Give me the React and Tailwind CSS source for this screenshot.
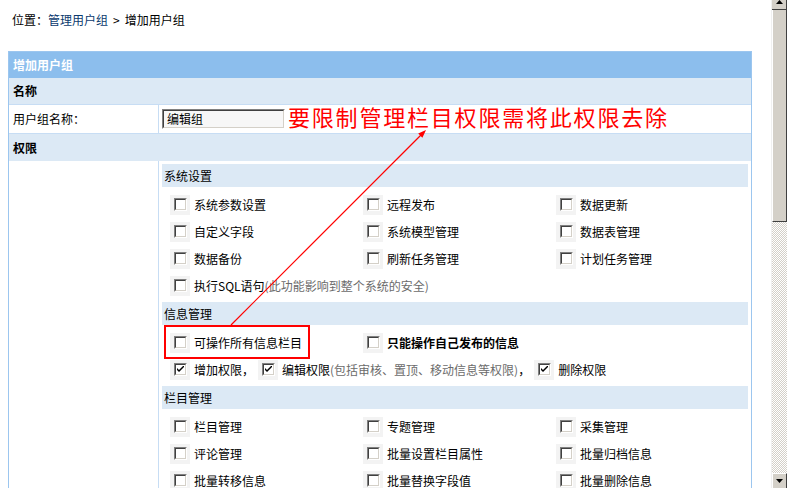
import React from "react";

function Cb({ checked }) {
  return (
    <span className="inline-flex w-[20px] h-[20px] bg-[#f3f3f3] items-center justify-center shrink-0">
      <span className="w-[13px] h-[13px] border border-t-[#808080] border-l-[#808080] border-b-[#ffffff] border-r-[#ffffff] flex">
        <span className="flex-1 border border-t-[#404040] border-l-[#404040] border-b-[#d4d0c8] border-r-[#d4d0c8] bg-white flex items-center justify-center">
          {checked && (
            <svg width="7" height="7" viewBox="0 0 7 7" className="block">
              <path d="M0 2 L0 4 L2 6 L7 1 L7 -1 L2 4 Z" fill="#000" />
            </svg>
          )}
        </span>
      </span>
    </span>
  );
}

function Item({ children, checked, bold }) {
  return (
    <div className="flex items-center gap-[4px] h-[27px]">
      <Cb checked={checked} />
      <span className={bold ? "font-bold" : ""}>{children}</span>
    </div>
  );
}

function SubHead({ children }) {
  return (
    <div className="h-[23px] bg-[#dce9f5] flex items-center pl-[2px]">{children}</div>
  );
}

function Grid({ children }) {
  return (
    <div className="pl-[8px] pt-[4px] pb-[3px] grid grid-cols-[193px_193px_1fr]">
      {children}
    </div>
  );
}

export default function App() {
  return (
    <div className="relative w-[787px] h-[488px] overflow-hidden bg-white flex text-[12px] leading-[14px] text-black font-['Noto_Sans_CJK_SC',sans-serif]">
      <div className="w-[771px] shrink-0">
        <div className="pt-[13px] pl-[12px] h-[27px]">
          位置：<span className="text-[#0b3a6e]">管理用户组</span>
          <span className="mx-[5px]">&gt;</span>增加用户组
        </div>
        <div className="mt-[24px] ml-[8px] w-[744px] border border-[#9cc6ef]">
          <div className="h-[26px] bg-[#8cbeed] text-white font-bold flex items-center pl-[4px]">
            增加用户组
          </div>
          <div className="h-[27px] bg-[#dce9f5] font-bold flex items-center pl-[4px] border-b border-[#c7ddf4]">
            名称
          </div>
          <div className="h-[29px] flex border-b border-[#c7ddf4]">
            <div className="w-[150px] border-r border-[#c7ddf4] flex items-center pl-[4px]">
              用户组名称：
            </div>
            <div className="flex items-center pl-[3px]">
              <div className="w-[123px] h-[20px] border border-t-[#808080] border-l-[#808080] border-b-[#ffffff] border-r-[#ffffff] flex">
                <div className="flex-1 border border-t-[#404040] border-l-[#404040] border-b-[#d4d0c8] border-r-[#d4d0c8] bg-[#f7f7f7] flex items-center pl-[3px]">
                  编辑组
                </div>
              </div>
            </div>
          </div>
          <div className="h-[27px] bg-[#dce9f5] font-bold flex items-center pl-[4px]">
            权限
          </div>
          <div className="flex">
            <div className="w-[150px] border-r border-[#c7ddf4] shrink-0"></div>
            <div className="flex-1 pl-[3px] pr-[3px] pt-[3px]">
              <SubHead>系统设置</SubHead>
              <Grid>
                <Item>系统参数设置</Item>
                <Item>远程发布</Item>
                <Item>数据更新</Item>
                <Item>自定义字段</Item>
                <Item>系统模型管理</Item>
                <Item>数据表管理</Item>
                <Item>数据备份</Item>
                <Item>刷新任务管理</Item>
                <Item>计划任务管理</Item>
                <div className="col-span-3">
                  <Item>
                    执行SQL语句<span className="text-[#6b6b6b]">(此功能影响到整个系统的安全)</span>
                  </Item>
                </div>
              </Grid>
              <SubHead>信息管理</SubHead>
              <Grid>
                <Item>可操作所有信息栏目</Item>
                <div className="col-span-2">
                  <Item bold>只能操作自己发布的信息</Item>
                </div>
                <div className="col-span-3 flex items-center h-[27px] gap-[4px]">
                  <Cb checked />
                  <span>增加权限，</span>
                  <Cb checked />
                  <span>
                    编辑权限<span className="text-[#6b6b6b]">(包括审核、置顶、移动信息等权限)</span>，
                  </span>
                  <Cb checked />
                  <span>删除权限</span>
                </div>
              </Grid>
              <SubHead>栏目管理</SubHead>
              <Grid>
                <Item>栏目管理</Item>
                <Item>专题管理</Item>
                <Item>采集管理</Item>
                <Item>评论管理</Item>
                <Item>批量设置栏目属性</Item>
                <Item>批量归档信息</Item>
                <Item>批量转移信息</Item>
                <Item>批量替换字段值</Item>
                <Item>批量删除信息</Item>
              </Grid>
            </div>
          </div>
        </div>
      </div>

      {/* scrollbar */}
      <div className="w-[16px] h-[488px] flex flex-col border-l border-[#f0f0f0] shrink-0">
        <div className="h-[10px] bg-[#d4d0c8] border-b border-[#404040] border-r border-r-[#404040] flex justify-center">
          <svg width="7" height="4" viewBox="0 0 7 4" className="block">
            <path d="M0 4 L3.5 0 L7 4 Z" fill="#000" />
          </svg>
        </div>
        <div className="h-[212px] bg-[#d4d0c8] border-l border-l-white border-r border-r-[#404040] border-b border-b-[#404040]"></div>
        <div className="flex-1 bg-[repeating-conic-gradient(#d4d0c8_0%_25%,#ffffff_0%_50%)] bg-size-[2px_2px]"></div>
        <div className="h-[15px] bg-[#d4d0c8] border-t border-t-white border-l border-l-white border-r border-r-[#404040] flex justify-center items-center">
          <svg width="7" height="4" viewBox="0 0 7 4" className="block">
            <path d="M0 0 L3.5 4 L7 0 Z" fill="#000" />
          </svg>
        </div>
      </div>

      {/* annotations */}
      <div className="absolute left-[288px] top-[103px] text-[22px] leading-[26px] tracking-[1.8px] text-[#ff0000] font-normal whitespace-nowrap">
        要限制管理栏目权限需将此权限去除
      </div>
      <div className="absolute left-[164px] top-[325px] w-[146px] h-[34px] border-2 border-[#ff0000]"></div>
      <svg className="absolute left-0 top-0 pointer-events-none" width="787" height="488">
        <line x1="231" y1="325" x2="421" y2="135" stroke="#ff0000" strokeWidth="1.2" />
        <path d="M426 130 L422.4 137.8 L418.2 133.6 Z" fill="#ff0000" />
      </svg>
    </div>
  );
}
